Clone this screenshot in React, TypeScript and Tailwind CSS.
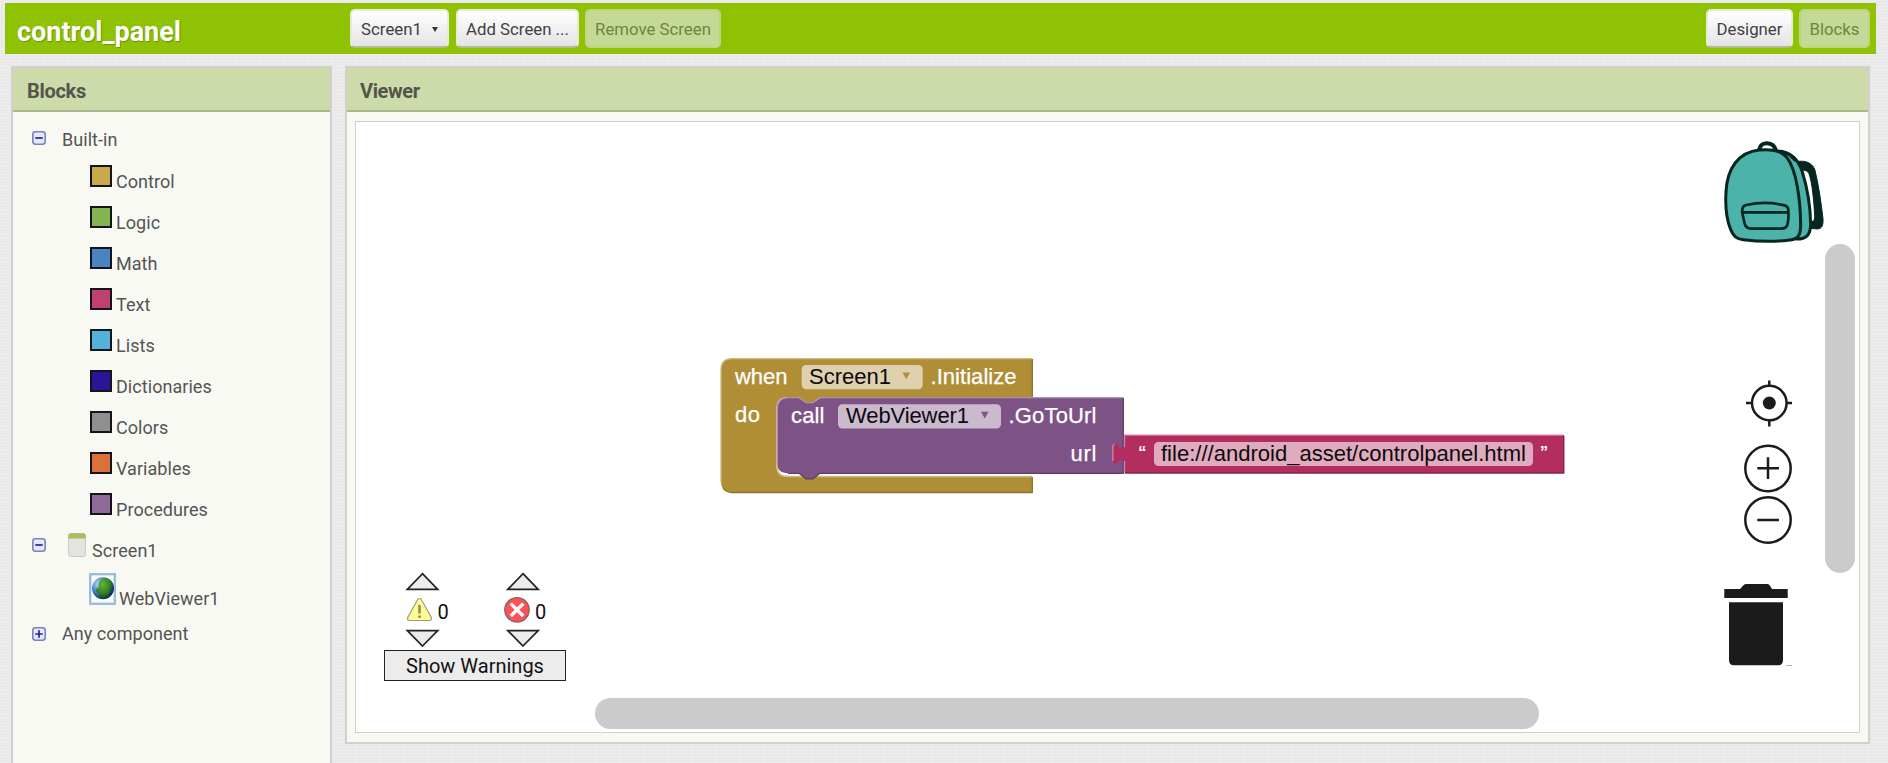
import React from "react";

const categories = [
  { name: "Control", color: "bg-[#cba84a]" },
  { name: "Logic", color: "bg-[#85b553]" },
  { name: "Math", color: "bg-[#4b83c1]" },
  { name: "Text", color: "bg-[#c0416f]" },
  { name: "Lists", color: "bg-[#54b3dc]" },
  { name: "Dictionaries", color: "bg-[#2a1597]" },
  { name: "Colors", color: "bg-[#8f8f8f]" },
  { name: "Variables", color: "bg-[#da7139]" },
  { name: "Procedures", color: "bg-[#8f6a98]" },
];

function Toggle({ open }: { open: boolean }) {
  return (
    <svg className="size-[14px] shrink-0" viewBox="0 0 14 14">
      <rect x="0.8" y="0.8" width="12.4" height="12.4" rx="2.6" fill="#e4e9f8" stroke="#7d82bd" strokeWidth="1.6" />
      <path d={open ? "M3.3 7H10.7" : "M3.3 7H10.7M7 3.3V10.7"} stroke="#2b1fa8" strokeWidth="1.7" />
    </svg>
  );
}

function ToolButton({ children, className, active = true }: { children: React.ReactNode; className: string; active?: boolean }) {
  return (
    <button
      className={
        "flex h-[39px] items-center justify-center rounded-[5px] border-2 pt-[2px] text-[16.8px] whitespace-nowrap " +
        (active
          ? "border-[#e6ecd5] border-b-[#aebd94] bg-linear-to-b from-white to-[#e4e4e4] text-[#3f3f3f] "
          : "border-[#bdd67f] bg-[#c5d996] text-[#6f8440] ") +
        className
      }
    >
      {children}
    </button>
  );
}

function Globe() {
  return (
    <svg className="h-[32px] w-[27px] shrink-0" viewBox="0 0 27 32">
      <defs>
        <radialGradient id="sea" cx="0.3" cy="0.3" r="0.8">
          <stop offset="0" stopColor="#b7daf5" />
          <stop offset="0.45" stopColor="#3f83c4" />
          <stop offset="1" stopColor="#0a1f45" />
        </radialGradient>
        <radialGradient id="land" cx="0.4" cy="0.3" r="0.8">
          <stop offset="0" stopColor="#63b53c" />
          <stop offset="0.6" stopColor="#2f7f1f" />
          <stop offset="1" stopColor="#0c3510" />
        </radialGradient>
      </defs>
      <rect x="1.2" y="1.2" width="24.6" height="29.6" fill="#fafdff" stroke="#9dbcd8" strokeWidth="2.4" />
      <circle cx="14" cy="15.3" r="11" fill="url(#sea)" />
      <path d="M12 7C15 4.5 20 5 23 9C24.5 13 22 14 21 18C19 22 16 25.500 12.500 25C9 24 11 21 8.500 19.500C5.500 18 8 15 10 14C8.500 12 9.500 9 12 7Z" fill="url(#land)" />
    </svg>
  );
}

function Sidebar() {
  return (
    <section className="h-[740px] w-[321px] shrink-0 border-2 border-[#d0d0d0] bg-[#f8f9f3]">
      <h2 className="h-[44px] border-b-2 border-[#aab78f] bg-[#ccdba9] pt-[9px] pl-[14px] text-[20px] leading-[28px] font-bold tracking-[-0.3px] text-[#54554c]">Blocks</h2>
      <div className="pl-[19px] text-[18px] leading-[24px] tracking-[0.05px] text-[#545454]">
        <div className="flex h-[41px] items-start gap-[16px] pt-[15px]">
          <span className="flex pt-[4px]"><Toggle open /></span>
          <span className="pt-[1px]">Built-in</span>
        </div>
        <ul className="pl-[58px]">
          {categories.map((c) => (
            <li key={c.name} className="flex h-[41px] items-start gap-[4px] pt-[12px]">
              <span className={"size-[22px] shrink-0 border-2 border-[#14151c] " + c.color} />
              <span className="pt-[5px]">{c.name}</span>
            </li>
          ))}
        </ul>
        <div className="flex h-[41px] items-start pt-[11px]">
          <span className="flex pt-[5px]"><Toggle open /></span>
          <svg className="ml-[22px] h-[24px] w-[18px]" viewBox="0 0 18 24">
            <rect x="0.5" y="0.5" width="17" height="23" rx="2.500" fill="#e3e3e1" stroke="#c9c9c6" />
            <path d="M0.300 5.500V3Q0.300 0.300 3 0.300H15Q17.700 0.300 17.700 3V5.500Z" fill="#a9bf5e" />
          </svg>
          <span className="pt-[6px] pl-[6px]">Screen1</span>
        </div>
        <div className="flex h-[48px] items-start pt-[10px] pl-[57px]">
          <Globe />
          <span className="pt-[14px] pl-[3px]">WebViewer1</span>
        </div>
        <div className="flex items-start gap-[16px] pt-[10px]">
          <span className="flex pt-[6px]"><Toggle open={false} /></span>
          <span className="pt-[1px]">Any component</span>
        </div>
      </div>
    </section>
  );
}

function BlockWorkspace() {
  return (
    <svg className="absolute inset-0 h-full w-full" viewBox="356 122 1503 610" fontFamily="'Liberation Sans', Arial, sans-serif" fontSize="22">
      <path d="M1032.500 358.700H732Q721 358.700 721 370V481Q721 492.500 732 492.500H1032.500V477H788Q776.500 477 776.500 466V408Q776.500 397 788 397H799L806 403H813L820 397H1032.500Z" fill="#b08e36" />
      <path d="M721 482V370Q721 358.700 732 358.700H1032M777 467Q778 476.500 788 476.500H1032" fill="none" stroke="#cdb982" strokeWidth="1.300" />
      <path d="M1032.300 359V397M1032.300 477V492.500H732Q726 492.500 723 488" fill="none" stroke="#8b7230" strokeWidth="1.300" />

      <path d="M788 397.500H799L806 402.500H813L820 397.500H1123.500V473.300H820L813 478.800H806L799 473.300H788Q777 473.300 777 462V409Q777 397.500 788 397.500Z" fill="#7d5385" />
      <path d="M777.300 465V409Q777.300 397.700 788 397.700H799L806 402.700H813L820 397.700H1123" fill="none" stroke="#ae94b2" strokeWidth="1.300" />
      <path d="M1123.300 398V473.300H820L813 478.800H806L799 473.300H788" fill="none" stroke="#5e3d66" strokeWidth="1.300" />

      <path d="M1124.500 435H1564V473H1124.500V461L1120 459Q1118 464.500 1114 463.500L1112.300 461V446L1114 443.500Q1118 444 1120 449L1124.500 447Z" fill="#b32d5e" />
      <path d="M1112.800 461V446L1114.500 444M1124.500 447V435.200H1563M1124.500 461V473" fill="none" stroke="#d585a2" strokeWidth="1.300" />
      <path d="M1563.800 436V473H1125" fill="none" stroke="#7f2447" strokeWidth="1.300" />

      <rect x="801.700" y="365" width="121" height="24.300" rx="4.500" fill="#dfd1ae" />
      <rect x="838" y="404.300" width="163" height="24.300" rx="4.500" fill="#cbbace" />
      <rect x="1154" y="442" width="379" height="24" rx="4.500" fill="#e1abbf" />
      <path d="M902.500 372.500H910L906.300 379.300Z" fill="#b08e36" />
      <path d="M981 411.700H988.500L984.800 418.500Z" fill="#7d5385" />

      <g fill="#fff" stroke="#fff" strokeWidth="0.250">
        <text x="735" y="383.700" textLength="52.500">when</text>
        <text x="930.500" y="383.700" textLength="86">.Initialize</text>
        <text x="735" y="421.500" textLength="25">do</text>
        <text x="791" y="422.700" textLength="33.500">call</text>
        <text x="1008.500" y="422.700" textLength="88">.GoToUrl</text>
        <text x="1070.500" y="460.500" textLength="26">url</text>
        <text x="1138.800" y="460" fontSize="21">“</text>
        <text x="1540.500" y="460" fontSize="21">”</text>
      </g>
      <g fill="#0c0a0c">
        <text x="809" y="383.700" textLength="82">Screen1</text>
        <text x="846" y="422.700" textLength="123">WebViewer1</text>
        <text x="1161" y="460.700" textLength="365" lengthAdjust="spacingAndGlyphs">file:///android_asset/controlpanel.html</text>
      </g>

      <g fill="none" stroke="#1c1c1c" strokeWidth="2.500">
        <circle cx="1769.300" cy="403" r="17.300" />
        <path d="M1769.300 380.500V386M1769.300 420V426.500M1746 403H1752.500M1786.500 403H1792" />
        <circle cx="1768" cy="468.500" r="22.700" />
        <path d="M1757.300 468.300H1779M1768 457.300V479" />
        <circle cx="1768" cy="520" r="22.700" />
        <path d="M1757.300 520H1779" />
      </g>
      <circle cx="1769.300" cy="403" r="6.500" fill="#1c1c1c" />

      <path d="M1724.300 589H1740L1744 584.700Q1745 584 1746 584H1767Q1768.500 584 1769.500 585L1772 589H1787.700V598H1724.300Z" fill="#1b1b1b" />
      <path d="M1729 602.300H1783V660Q1783 665.300 1778 665.300H1734Q1729 665.300 1729 660Z" fill="#1b1b1b" />
      <path d="M1786 665.500H1792" stroke="#999" strokeWidth="0.700" />

      <g fill="#ececec" stroke="#222" strokeWidth="1.700">
        <path d="M422.500 573.700L437.700 589.300H407.300Z" />
        <path d="M523 573.700L538.200 589.300H507.800Z" />
        <path d="M422.500 646L437.700 630.700H407.300Z" />
        <path d="M523 646L538.200 630.700H507.800Z" />
      </g>
      <path d="M417.700 599.500Q419.500 597.500 421.300 599.500L431.300 617.500Q432 620.300 429.500 620.500H409.500Q406.800 620.300 407.700 617.500Z" fill="#fdfc96" stroke="#9c9c88" strokeWidth="1.200" />
      <path d="M419.500 605V613.500M419.500 615.500V618" stroke="#8f8f5c" strokeWidth="2.600" />
      <circle cx="517" cy="609.800" r="12.200" fill="#fa5257" stroke="#8f6060" strokeWidth="1.400" />
      <path d="M510.800 603.600L523.200 616M523.200 603.600L510.800 616" stroke="#fff" strokeWidth="3.400" />
      <g fill="#111" fontFamily="Roboto, sans-serif" fontSize="20">
        <text x="437.500" y="618.500">0</text>
        <text x="535" y="618.500">0</text>
      </g>
    </svg>
  );
}

function Backpack() {
  return (
    <svg className="absolute top-[15px] left-[1364px] size-[110px]" viewBox="90 50 330 330" stroke="#06261f" strokeLinejoin="round" strokeLinecap="round">
      <path d="M208 86C213 62 250 62 258 90" fill="none" strokeWidth="12" />
      <path d="M325 123C350 120 369 130 375 150C386 195 393 245 399 295C400 315 396 325 382 326L362 324L364 304C372 304 374 298 374 288C372 240 366 185 357 160C353 151 345 149 336 149Z" fill="#06261f" strokeWidth="3" />
      <path d="M258 92C300 92 325 118 337 155C351 200 361 260 362 310C362 345 348 357 318 356Z" fill="#4bb3aa" strokeWidth="9" />
      <path d="M275 93C298 98 316 108 325 124L312 122Q298 104 275 93Z" fill="#06261f" strokeWidth="2" />
      <path d="M208 89C145 95 111 145 108 215C105 265 111 300 121 325C130 348 140 356 160 358C205 364 260 364 300 359C325 356 332 345 332 310C331 240 320 150 291 112C275 91 240 86 208 89Z" fill="#4bb3aa" strokeWidth="9" />
      <path d="M169 254C205 246 250 247 283 255Q296 258 295 272Q297 295 292 314Q288 325 273 325H184Q168 325 164 310L157 279Q154 257 169 254ZM157 276H294" fill="none" strokeWidth="8" />
    </svg>
  );
}

function Viewer() {
  return (
    <section className="h-[678px] w-[1525px] shrink-0 border-2 border-[#d0d1cc] bg-[#f8f9f3]">
      <h2 className="h-[44px] border-b-2 border-[#aab78f] bg-[#ccdba9] pt-[9px] pl-[13px] text-[20px] leading-[28px] font-bold tracking-[-0.4px] text-[#54554c]">Viewer</h2>
      <div className="relative mt-[9px] ml-[8px] h-[612px] w-[1505px] border border-[#cfd0ca] bg-white">
        <BlockWorkspace />
        <Backpack />
        <button className="absolute top-[528px] left-[28px] flex h-[31px] w-[182px] items-center justify-center border-[1.5px] border-[#222] bg-[#ececec] text-[20px] text-[#111]">Show Warnings</button>
        <div className="absolute top-[122px] left-[1469px] h-[329px] w-[30px] rounded-full bg-[#cbcbcb]" />
        <div className="absolute top-[576px] left-[239px] h-[31px] w-[944px] rounded-full bg-[#cbcbcb]" />
      </div>
    </section>
  );
}

export default function App() {
  return (
    <div className="h-[763px] w-[1888px] overflow-hidden bg-[#e7e7e7] bg-[repeating-linear-gradient(0deg,#ffffff38_0_1px,transparent_1px_3px),repeating-linear-gradient(90deg,#ffffff38_0_1px,transparent_1px_3px)] pt-[3px] font-[Roboto,sans-serif]">
      <header className="ml-[5px] flex h-[51px] w-[1871px] items-start bg-[#8fc202] pt-[6px] pr-[6px]">
        <h1 className="w-[345px] pt-[5px] pl-[12px] text-[27px] leading-[36px] font-bold text-white [text-shadow:1px_1px_1px_#6c9400]">control_panel</h1>
        <div className="flex gap-[7px]">
          <ToolButton className="w-[99px]">
            Screen1
            <svg className="ml-[10px] h-[5px] w-[6px]" viewBox="0 0 6 5">
              <path d="M0 0H6L3 5Z" fill="#333" />
            </svg>
          </ToolButton>
          <ToolButton className="w-[123px]">Add Screen ...</ToolButton>
          <ToolButton className="-ml-px w-[136px]" active={false}>Remove Screen</ToolButton>
        </div>
        <div className="ml-auto flex gap-[6px]">
          <ToolButton className="w-[87px]">Designer</ToolButton>
          <ToolButton className="w-[71px]" active={false}>Blocks</ToolButton>
        </div>
      </header>
      <main className="mt-[12px] ml-[11px] flex gap-[13px]">
        <Sidebar />
        <Viewer />
      </main>
    </div>
  );
}
